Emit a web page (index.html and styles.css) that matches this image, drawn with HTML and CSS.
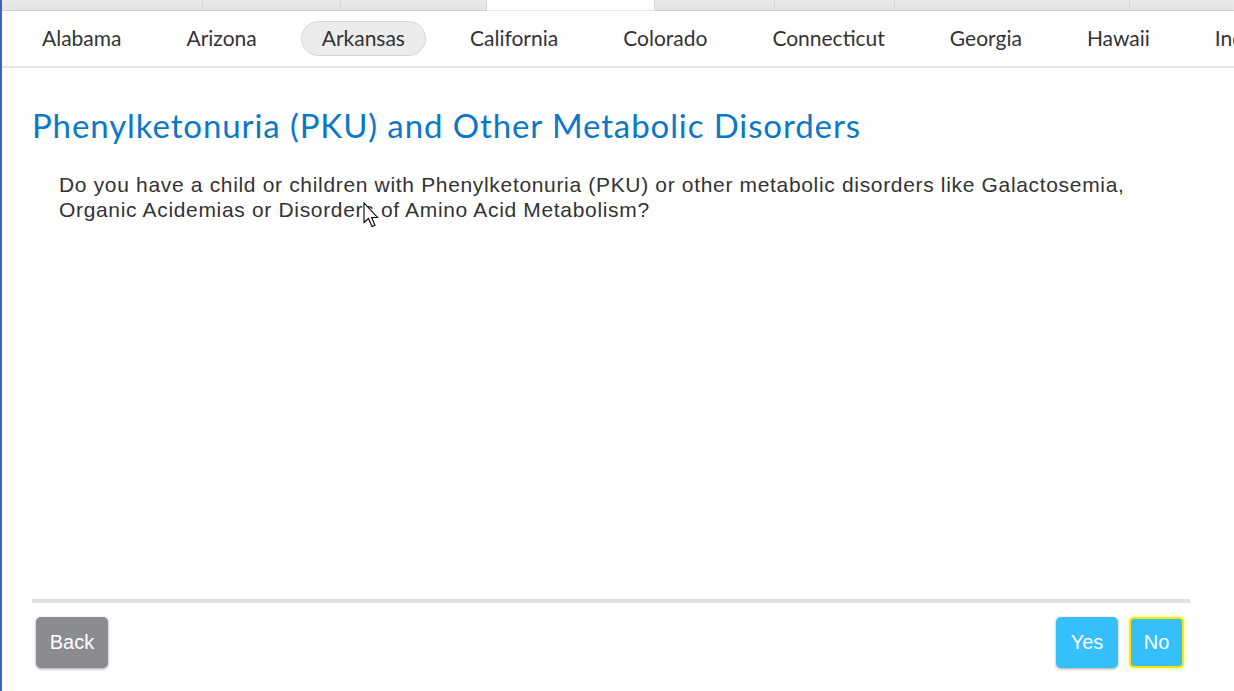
FILE: index.html
```html
<!DOCTYPE html>
<html lang="en">
<head>
  <meta charset="UTF-8">
  <meta name="viewport" content="width=device-width, initial-scale=1.0">
  <title>Newborn Screening</title>
  <link rel="stylesheet" href="styles.css">
</head>
<body>
  <div class="page">
    <div class="tabs">
      <div class="tab tab-1"></div>
      <div class="tab tab-2"></div>
      <div class="tab tab-3"></div>
      <div class="tab tab-active"></div>
      <div class="tab tab-5"></div>
      <div class="tab tab-6"></div>
      <div class="tab tab-7"></div>
      <div class="tab tab-8"></div>
    </div>

    <nav class="states">
      <a class="state">Alabama</a>
      <a class="state">Arizona</a>
      <a class="state selected">Arkansas</a>
      <a class="state">California</a>
      <a class="state">Colorado</a>
      <a class="state">Connecticut</a>
      <a class="state">Georgia</a>
      <a class="state">Hawaii</a>
      <a class="state">Indiana</a>
    </nav>

    <main class="question">
      <div class="question-body">
        <h1 class="question-title">Phenylketonuria (PKU) and Other Metabolic Disorders</h1>
        <p class="question-text">Do you have a child or children with Phenylketonuria (PKU) or other metabolic disorders like Galactosemia, Organic Acidemias or Disorders of Amino Acid Metabolism?</p>
      </div>

      <div class="question-footer">
        <div class="divider"></div>
        <div class="actions">
          <button class="btn btn-back">Back</button>
          <div class="answers">
            <button class="btn btn-answer">Yes</button>
            <button class="btn btn-answer focused">No</button>
          </div>
        </div>
      </div>
    </main>

    <svg class="cursor" width="18" height="27" viewBox="0 0 18 27">
      <path d="M1 1 L1 20.5 L5.5 16.5 L9 24.5 L12 23.2 L8.6 15.5 L14.5 15.5 Z" fill="#fff" stroke="#000" stroke-width="1.1" stroke-linejoin="miter"/>
    </svg>
  </div>
</body>
</html>
```

FILE: styles.css
```css
html, body {
  margin: 0;
  padding: 0;
  background-color: #fff;
  overflow: hidden;
}
.page {
  position: relative;
  height: 691px;
  border-left: 2px solid #3d63c0;
  display: flex;
  flex-direction: column;
  box-sizing: border-box;
}

/* top tab strip */
.tabs {
  display: flex;
  height: 11px;
  flex-shrink: 0;
}
.tab {
  height: 10px;
  background: linear-gradient(#e9e9e9, #e4e4e4);
  border-bottom: 1px solid #d2d2d2;
  border-right: 1px solid #d6d6d6;
}
.tab-1 { width: 200px; }
.tab-2 { width: 137px; }
.tab-3 { width: 145px; }
.tab-active {
  width: 167px;
  background: #fff;
  border-bottom: 1px solid #e6e6e6;
}
.tab-5 { width: 119px; }
.tab-6 { width: 119px; }
.tab-7 { width: 234px; }
.tab-8 { flex: 1; border-right: none; }

/* state navigation */
.states {
  display: flex;
  align-items: center;
  gap: 23px;
  height: 55px;
  padding-left: 19px;
  border-bottom: 2px solid #e6e6e6;
  white-space: nowrap;
  overflow: hidden;
  flex-shrink: 0;
}
.state {
  font-family: Lato, "Open Sans", sans-serif;
  font-size: 21px;
  color: #333;
  padding: 3px 20px 5px;
  border: 1px solid transparent;
  border-radius: 18px;
  cursor: pointer;
}
.state.selected {
  background-color: #ececec;
  border-color: #d6d6d6;
}

/* question */
.question {
  flex: 1;
  display: flex;
  flex-direction: column;
  padding: 0 44px 0 30px;
}
.question-body {
  flex: 1;
}
.question-title {
  font-family: Lato, "Open Sans", sans-serif;
  font-weight: normal;
  font-size: 33px;
  letter-spacing: 0.9px;
  color: #0b78c6;
  margin: 37px 0 0;
  line-height: 40px;
}
.question-text {
  font-family: "Liberation Sans", Arial, sans-serif;
  font-size: 21px;
  letter-spacing: 0.67px;
  line-height: 25px;
  color: #333;
  margin: 27px 0 0 27px;
}

.question-footer {
  padding-bottom: 23px;
}
.divider {
  height: 4px;
  background-color: #e0e0e0;
  margin-bottom: 14px;
}
.actions {
  display: flex;
  justify-content: space-between;
  padding: 0 6px 0 4px;
}
.answers {
  display: flex;
  gap: 11px;
}
.btn {
  font-family: "Liberation Sans", Arial, sans-serif;
  font-size: 20px;
  color: #fff;
  height: 51px;
  border: 1px solid transparent;
  border-radius: 5px;
  box-shadow: 0 1px 3px rgba(0, 0, 0, 0.35);
  cursor: pointer;
}
.btn-back {
  background-color: #8b8c92;
  width: 72px;
}
.btn-answer {
  background-color: #36c0fb;
  width: 62px;
}
.btn-answer.focused {
  width: 55px;
  border: 2px solid #ffe500;
  box-shadow: 0 0 4px #fff176;
}

.cursor {
  position: absolute;
  left: 361px;
  top: 202px;
  pointer-events: none;
}
```
